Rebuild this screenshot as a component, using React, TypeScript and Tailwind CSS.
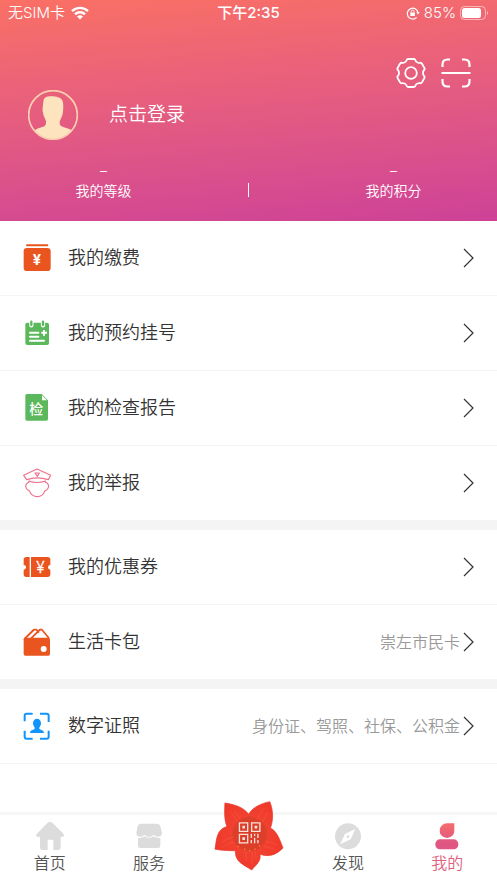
import type { ReactNode } from "react";

interface MenuItem {
  label: string;
  detail?: string;
  icon: ReactNode;
}

const feeIcon = (
  <svg viewBox="69 72 84 84" className="h-7 w-7 shrink-0" aria-hidden="true">
    <rect x="78" y="73" width="67" height="6" rx="3" fill="#e9541f" />
    <rect x="71" y="84" width="81" height="69" rx="10" fill="#e9541f" />
    <text x="111" y="134" textAnchor="middle" fontSize="44" fontWeight="700" fill="#fff">¥</text>
  </svg>
);

const calendarIcon = (
  <svg viewBox="69 297 84 84" className="h-7 w-7 shrink-0" aria-hidden="true">
    <rect x="76" y="308" width="71" height="67" rx="6" fill="#5cb85c" />
    <path d="M94 304v12M129 304v12" stroke="#fff" strokeWidth="13" strokeLinecap="round" />
    <path d="M94 305v10M129 305v10" stroke="#5cb85c" strokeWidth="7" strokeLinecap="round" />
    <path d="M90 338h25M90 350h25M90 362h42" stroke="#fff" strokeWidth="6" strokeLinecap="round" />
    <path d="M132 330v17M124 338h17" stroke="#fff" strokeWidth="6" />
  </svg>
);

const reportIcon = (
  <svg viewBox="69 72 84 84" className="h-7 w-7 shrink-0" aria-hidden="true">
    <path d="M81 72h44l19 19v56a5 5 0 0 1-5 5H81a5 5 0 0 1-5-5V77a5 5 0 0 1 5-5z" fill="#5cb85c" />
    <path d="M126 76v15h15z" fill="#fff" />
    <text x="109" y="132" textAnchor="middle" fontSize="42" fontWeight="500" fill="#fff">检</text>
  </svg>
);

const policeIcon = (
  <svg viewBox="69 296 84 84" className="h-7 w-7 shrink-0 overflow-visible" fill="none" stroke="#f0718c" strokeWidth="3.5" strokeLinejoin="round" aria-hidden="true">
    <path d="M71 315l40-19 41 19-7 13q-34-11-65 0z" />
    <path d="M105 308h13l-6 10z" />
    <path d="M86 332q25 9 51 0" />
    <path d="M87 331v4l-5 3c-7 5-6 15 0 20l6 3c4 11 14 18 24 18s19-7 23-18l6-3c6-5 7-15 0-20l-5-3v-4" />
  </svg>
);

const couponIcon = (
  <svg viewBox="69 99 84 84" className="h-7 w-7 shrink-0" aria-hidden="true">
    <rect x="71" y="111" width="80" height="60" rx="8" fill="#e9541f" />
    <circle cx="71" cy="142" r="7" fill="#fff" />
    <circle cx="151" cy="142" r="7" fill="#fff" />
    <path d="M91 111v60" stroke="#fff" strokeWidth="4" />
    <text x="121" y="158" textAnchor="middle" fontSize="46" fill="#fff" stroke="#fff">¥</text>
  </svg>
);

const walletIcon = (
  <svg viewBox="69 324 84 84" className="h-7 w-7 shrink-0" aria-hidden="true">
    <path d="M75 355l27-26h7l8 9M92 355l28-26h6l21 26" fill="none" stroke="#e9541f" strokeWidth="5" strokeLinejoin="round" />
    <path d="M96 343l9-8 5 4-16 15H84z" fill="#fff" />
    <path d="M73 357l29-28M93 355l27-26" stroke="#e9541f" strokeWidth="5" />
    <rect x="71" y="353" width="79" height="54" rx="5" fill="#e9541f" />
    <circle cx="131" cy="387" r="9" fill="#fff" />
  </svg>
);

const idIcon = (
  <svg viewBox="69 96 84 84" className="h-7 w-7 shrink-0" fill="#1294fb" aria-hidden="true">
    <path
      d="M74 124v-17q0-6 6-6h18M120 101h20q6 0 6 6v19M146 152v18q0 6-6 6h-20M98 176H80q-6 0-6-6v-18"
      fill="none"
      stroke="#1294fb"
      strokeWidth="6"
    />
    <ellipse cx="111" cy="130" rx="12" ry="14" />
    <path d="M104 138h14v8c2 4 14 3 14 13H90c0-10 12-9 14-13z" />
  </svg>
);

const menuGroups: MenuItem[][] = [
  [
    { label: "我的缴费", icon: feeIcon },
    { label: "我的预约挂号", icon: calendarIcon },
    { label: "我的检查报告", icon: reportIcon },
    { label: "我的举报", icon: policeIcon },
  ],
  [
    { label: "我的优惠券", icon: couponIcon },
    { label: "生活卡包", detail: "崇左市民卡", icon: walletIcon },
  ],
  [{ label: "数字证照", detail: "身份证、驾照、社保、公积金", icon: idIcon }],
];

function StatusBar() {
  return (
    <div className="grid h-[26px] grid-cols-3 items-center px-2 text-[15px]">
      <div className="flex items-center gap-1.5">
        <span>无SIM卡</span>
        <svg viewBox="0 0 18 14" className="h-3.5 w-[18px]" fill="none" stroke="#fff" strokeWidth="2.4" aria-hidden="true">
          <path d="M1 5.2a11.4 11.4 0 0 1 16 0M4 8.3a7.2 7.2 0 0 1 10 0" />
          <path d="M9 13.5l-3-3a4.2 4.2 0 0 1 6 0z" fill="#fff" stroke="none" />
        </svg>
      </div>
      <span className="text-center font-medium">下午2:35</span>
      <div className="flex items-center justify-end gap-1">
        <svg viewBox="0 0 14 14" className="h-3.5 w-3.5" fill="none" stroke="#fff" strokeWidth="1.2" aria-hidden="true">
          <path d="M10.6 11.3A5.4 5.4 0 1 1 12 7" />
          <path d="M10.2 6.2h3.6L12 8.6z" fill="#fff" stroke="none" />
          <rect x="4.3" y="6.4" width="4.6" height="3.6" rx="0.5" fill="#fff" stroke="none" />
          <path d="M5.2 6.8V5.5a1.4 1.4 0 0 1 2.8 0v1.3" strokeWidth="0.9" />
        </svg>
        <span>85%</span>
        <svg viewBox="0 0 29 14" className="h-3.5 w-[29px]" aria-hidden="true">
          <rect x="0.5" y="0.5" width="25" height="13" rx="4" fill="none" stroke="#fff" strokeOpacity="0.5" />
          <rect x="2" y="2" width="19" height="10" rx="2.5" fill="#fff" />
          <path d="M27 5q2 2 0 4z" fill="#fff" fillOpacity="0.6" />
        </svg>
      </div>
    </div>
  );
}

function Stat({ label }: { label: string }) {
  return (
    <div className="flex flex-[5] flex-col items-center text-sm leading-5">
      <span>–</span>
      <span>{label}</span>
    </div>
  );
}

function ProfileHeader() {
  return (
    <header className="bg-linear-175 from-[#fa7064] to-[#ce4197] pb-5 text-white">
      <StatusBar />
      <div className="mt-8 flex justify-end gap-[15px] pr-[26px]">
        <button type="button" aria-label="设置">
          <svg viewBox="-15 -15 30 30" className="h-[30px] w-[30px]" fill="none" stroke="#fff" strokeWidth="1.8" strokeLinejoin="round">
            <path d="M-3-14H3Q4-14 4.4-12.8 5-11 6.5-10.5 7.5-10 8.8-10.2 10.2-10.5 11-9.2L13.4-5Q14-3.9 13.1-3 12-2 12 0 12 2 13.1 3 14 3.9 13.4 5L11 9.2Q10.2 10.5 8.8 10.2 7.5 10 6.5 10.5 5 11 4.4 12.8 4 14 3 14H-3Q-4 14-4.4 12.8-5 11-6.5 10.5-7.5 10-8.8 10.2-10.2 10.5-11 9.2L-13.4 5Q-14 3.9-13.1 3-12 2-12 0-12-2-13.1-3-14-3.900-13.4-5L-11-9.2Q-10.2-10.5-8.8-10.2-7.5-10-6.5-10.5-5-11-4.4-12.8-4-14-3-14z" />
            <circle r="5.8" />
          </svg>
        </button>
        <button type="button" aria-label="扫一扫">
          <svg viewBox="0 0 30 30" className="h-[30px] w-[30px]" fill="none" stroke="#fff" strokeWidth="2.2">
            <path d="M1.500 9V6.500q0-5 5-5H9M21 1.500h2.500q5 0 5 5V9M28.500 21v2.500q0 5-5 5H21M9 28.500H6.500q-5 0-5-5V21M.5 15h29" />
          </svg>
        </button>
      </div>
      <button type="button" className="mt-0.5 flex items-center gap-[31px] pl-7 text-[19px]">
        <svg viewBox="0 0 150 150" className="h-[50px] w-[50px]" aria-hidden="true">
          <clipPath id="avatar-clip">
            <circle cx="75" cy="75" r="72" />
          </clipPath>
          <path
            d="M46 36C47 24 53 20 64 19C78 18 100 20 104 34C107 44 106 60 104 72C101 84 96 89 95 96C94 108 101 109 112 113C123 116 130 119 134 124V150H16V124C24 116 34 114 43 111C51 108 55 106 54 94C52 85 46 79 45 68C42 58 45 48 46 36z"
            fill="#fde4bf"
            clipPath="url(#avatar-clip)"
          />
          <circle cx="75" cy="75" r="73" fill="none" stroke="#fbcfb0" strokeWidth="5" />
        </svg>
        点击登录
      </button>
      <div className="mt-[21px] flex items-center">
        <Stat label="我的等级" />
        <div className="flex flex-[2] justify-center self-end pb-1">
          <span className="h-3.5 w-px bg-white" />
        </div>
        <Stat label="我的积分" />
      </div>
    </header>
  );
}

function MenuRow({ label, detail, icon }: MenuItem) {
  return (
    <li className="border-b border-[#f4f4f4]">
      <a href="#" className="flex h-[74px] items-center px-[23px]">
        {icon}
        <span className="ml-[17px] text-lg text-[#333]">{label}</span>
        <span className="ml-auto pr-[3px] text-base text-[#999]">{detail}</span>
        <svg viewBox="0 0 11 20" className="h-5 w-[11px] shrink-0" fill="none" stroke="#333" strokeWidth="1.2" aria-hidden="true">
          <path d="M1 1l9 9-9 9" />
        </svg>
      </a>
    </li>
  );
}

function Tab({ label, active, children }: { label: string; active?: boolean; children: ReactNode }) {
  return (
    <a
      href="#"
      aria-current={active ? "page" : undefined}
      className={`flex flex-1 flex-col items-center gap-[3px] pb-2.5 pt-[7px] text-base leading-5 ${
        active ? "text-[#e0607e]" : "text-[#555]"
      }`}
    >
      {children}
      {label}
    </a>
  );
}

function FlowerCode() {
  return (
    <svg viewBox="40 32 212 212" className="h-[70px] w-[70px]" aria-hidden="true">
      <defs>
        <radialGradient id="petal" gradientUnits="userSpaceOnUse" cx="148" cy="132" r="110">
          <stop offset="0" stopColor="#d8341f" />
          <stop offset="0.44" stopColor="#e23a26" />
          <stop offset="0.5" stopColor="#f14130" />
          <stop offset="1" stopColor="#f0382a" />
        </radialGradient>
      </defs>
      <path
        d="M73 38C99 42 128 49 145 72C158 50 183 39 209 34C220 60 220 90 211 114C232 124 239 150 249 174C229 196 203 203 179 193C184 214 167 226 154 241C132 225 102 217 105 183C83 182 64 182 43 178C48 151 46 119 79 109C70 87 72 61 73 38z"
        fill="url(#petal)"
        stroke="#e5372a"
        strokeWidth="2"
      />
      <path
        d="M85 62q15 12 27 32M100 60q12 14 20 28M190 55q-13 15-20 34M202 66q-8 22-20 34M62 160q17-16 36-18M66 172q18-14 38-16M232 166q-18-10-34-12M226 180q-18-8-34-10M139 213q-4-15-2-30M155 224q2-20 0-40M168 208q-2-14-5-24"
        fill="none"
        stroke="#ff6a4c"
        strokeWidth="2"
        opacity="0.5"
      />
      <circle cx="148" cy="131" r="51" fill="#d9442d" fillOpacity="0.6" />
      <g fill="#ffa33f">
        <circle cx="113" cy="170" r="2" />
        <circle cx="133" cy="178" r="2" />
        <circle cx="148" cy="183" r="2" />
        <circle cx="164" cy="178" r="2" />
        <circle cx="178" cy="168" r="2" />
      </g>
      <g fill="none" stroke="#ffe1dc" strokeWidth="4">
        <path d="M117 98h25v26h-25zM154 98h25v26h-25zM117 133h25v26h-25z" />
        <path d="M153 131v13M153 150v10M163 131v7M163 143v17M173 131v13M173 150v10" />
      </g>
      <path d="M126 107h8v8h-8zM163 107h8v8h-8zM126 142h8v8h-8z" fill="#ffe1dc" />
    </svg>
  );
}

function TabBar() {
  return (
    <nav className="mt-auto flex border-t-[3px] border-[#f7f7f7] bg-white">
      <Tab label="首页">
        <svg viewBox="107 96 84 84" className="h-7 w-7" fill="#dcdcdc" aria-hidden="true">
          <path d="M142 98q7-5 14 0l34 34q3 8-5 9h-4v31q0 8-8 8h-14v-31h-17v31h-15q-8 0-8-8v-31h-6q-8-1-4-9z" />
        </svg>
      </Tab>
      <Tab label="服务">
        <svg viewBox="405 96 84 84" className="h-7 w-7" fill="#dcdcdc" aria-hidden="true">
          <path d="M424 101h46q9 0 11 8l5 19q0 12-12 12-7 0-13-6-7 7-14 7t-13-7q-6 6-13 6-12 0-12-12l4-19q2-8 11-8z" />
          <path d="M414 144q12 1 20-5 13 9 26 0 9 6 21 5v23q0 7-7 7h-53q-7 0-7-7z" />
        </svg>
      </Tab>
      <div className="relative flex-1">
        <button type="button" aria-label="二维码" className="absolute bottom-3 left-1/2 -translate-x-1/2">
          <FlowerCode />
        </button>
      </div>
      <Tab label="发现">
        <svg viewBox="102 96 84 84" className="h-7 w-7" aria-hidden="true">
          <circle cx="144" cy="139" r="39" fill="#dcdcdc" />
          <path d="M166 117l-14 31-32 15 15-31z" fill="#fff" />
          <circle cx="144" cy="140" r="4" fill="#dcdcdc" />
        </svg>
      </Tab>
      <Tab label="我的" active>
        <svg viewBox="398 96 84 84" className="h-7 w-7" aria-hidden="true">
          <defs>
            <linearGradient id="me" gradientUnits="userSpaceOnUse" x1="0" y1="100" x2="0" y2="178">
              <stop offset="0" stopColor="#f56d6c" />
              <stop offset="0.7" stopColor="#e05782" />
              <stop offset="1" stopColor="#e05584" />
            </linearGradient>
          </defs>
          <path d="M440 100h22v22a22 22 0 1 1-22-22z" fill="url(#me)" />
          <rect x="405" y="148" width="69" height="30" rx="14" fill="url(#me)" />
        </svg>
      </Tab>
    </nav>
  );
}

export default function App() {
  return (
    <div className="flex min-h-screen flex-col bg-white font-['Inter','Noto_Sans_CJK_SC',sans-serif] font-[350]">
      <ProfileHeader />
      <main>
        {menuGroups.map((group, i) => (
          <ul
            key={i}
            className={i < menuGroups.length - 1 ? "border-b-10 border-[#f4f4f4] [&>li:last-child]:border-b-0" : ""}
          >
            {group.map((item) => (
              <MenuRow key={item.label} {...item} />
            ))}
          </ul>
        ))}
      </main>
      <TabBar />
    </div>
  );
}
